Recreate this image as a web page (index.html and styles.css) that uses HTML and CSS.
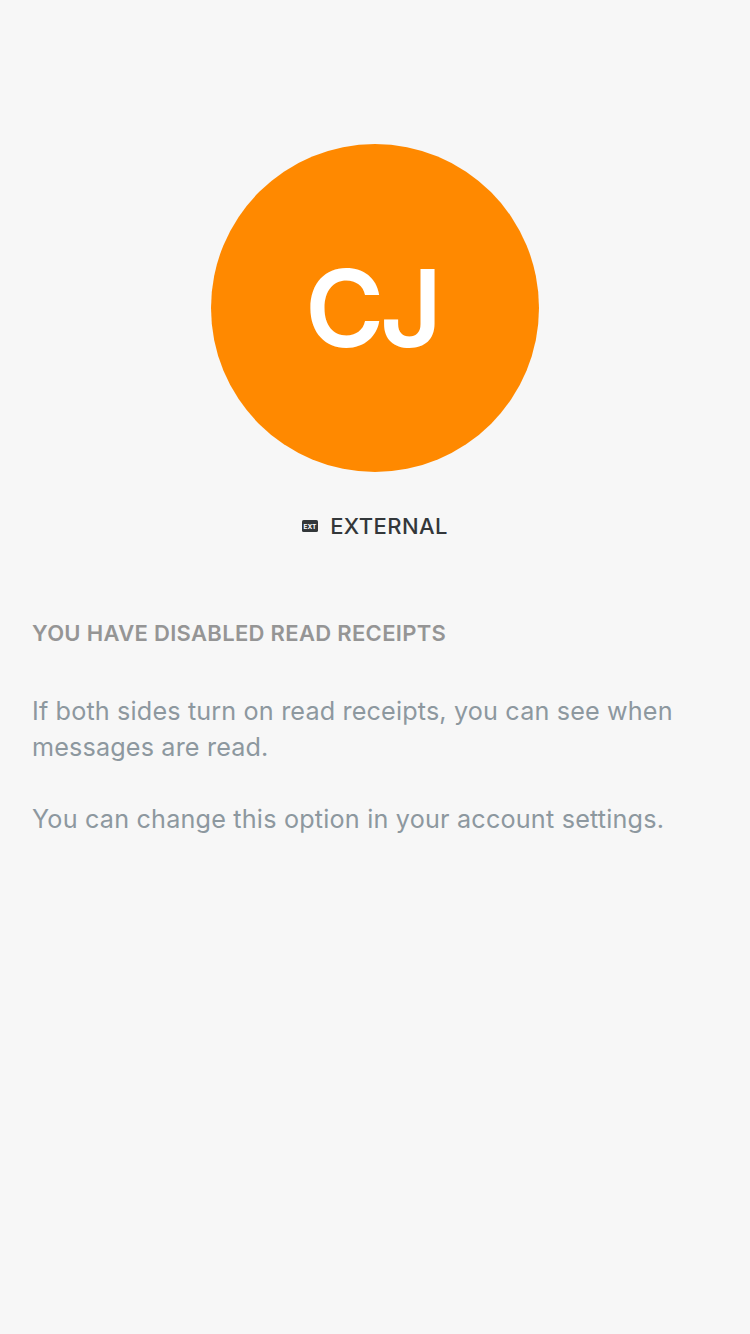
FILE: index.html
```html
<!DOCTYPE html>
<html lang="en">
<head>
<meta charset="utf-8">
<title>Profile</title>
<link rel="stylesheet" href="styles.css">
</head>
<body>
<main class="profile">
  <div class="avatar"><span class="initials">CJ</span></div>
  <div class="badge">
    <svg class="badge-icon" width="16" height="12" viewBox="0 0 16 12"><rect width="16" height="12" rx="1.6" fill="#33373a"/><text x="8" y="8.5" class="ext" textLength="12.8" lengthAdjust="spacingAndGlyphs">EXT</text></svg>
    <span class="badge-label">EXTERNAL</span>
  </div>
  <section class="receipts">
    <h2 class="heading">YOU HAVE DISABLED READ RECEIPTS</h2>
    <p class="note">If both sides turn on read receipts, you can see when<br>messages are read.</p>
    <p class="note note-last">You can change this option in your account settings.</p>
  </section>
</main>
</body>
</html>
```
FILE: styles.css
```css
body {
  margin: 0;
  background: #f7f7f7;
  font-family: Inter, "Liberation Sans", sans-serif;
}
.profile {
  display: flex;
  flex-direction: column;
  align-items: center;
  min-height: 1334px;
  box-sizing: border-box;
  padding-top: 144px;
}
.avatar {
  display: flex;
  align-items: center;
  justify-content: center;
  width: 328px;
  height: 328px;
  border-radius: 50%;
  background: #ff8900;
}
.initials {
  padding-right: 7px;
  color: #fff;
  font-size: 107.5px;
  font-weight: 600;
  letter-spacing: -4.3px;
  line-height: 130px;
}
.badge {
  display: flex;
  align-items: center;
  gap: 12px;
  height: 28px;
  margin-top: 40px;
}
.badge-icon { display: block; }
.ext {
  fill: #fff;
  font-size: 6.3px;
  font-weight: 700;
  text-anchor: middle;
}
.badge-label {
  color: #33373a;
  font-size: 22px;
  font-weight: 530;
  letter-spacing: 0.4px;
  line-height: 28px;
}
.receipts {
  align-self: stretch;
  margin-top: 79px;
  padding: 0 32px;
}
.heading {
  margin: 0 0 46px;
  color: #959595;
  font-size: 22px;
  font-weight: 570;
  letter-spacing: 0.32px;
  line-height: 28px;
}
.note {
  margin: 0 0 36px;
  color: #8d989f;
  font-size: 25.2px;
  letter-spacing: 0.15px;
  line-height: 36px;
  font-variant-ligatures: none;
  white-space: nowrap;
}
.note-last { letter-spacing: 0.19px; }
```
